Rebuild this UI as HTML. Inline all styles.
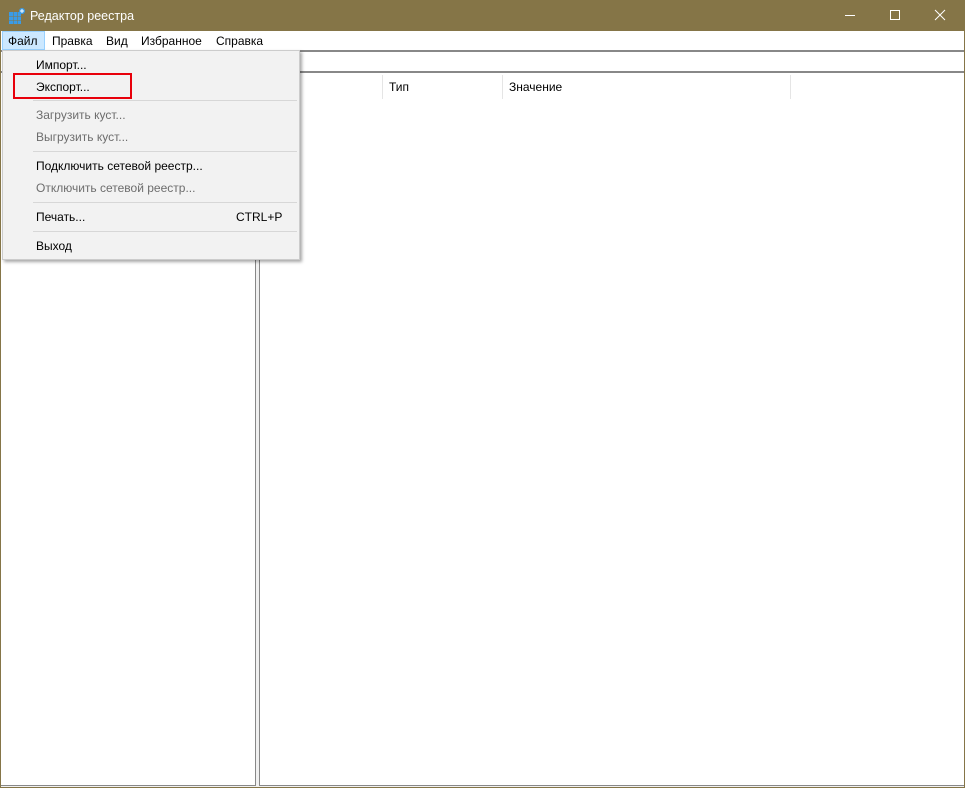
<!DOCTYPE html>
<html><head><meta charset="utf-8"><style>
*{margin:0;padding:0;box-sizing:border-box}
body{width:965px;height:788px;overflow:hidden;background:#857547;font-family:"Liberation Sans",sans-serif;font-size:12px;color:#000;position:relative}
.abs{position:absolute}
.title{left:30px;top:9px;color:#fff;font-size:12.5px}
.menubar{left:1px;top:31px;width:963px;height:19px;background:#fff}
.mi{position:absolute;top:3px}
.client{left:1px;top:50px;width:963px;height:737px;background:#f0f0f0}
.menu{left:2px;top:50px;width:298px;height:210px;background:#f2f2f2;border:1px solid #ccc;box-shadow:2px 2px 3px rgba(0,0,0,.35)}
.it{position:absolute;left:33px}
.dis{color:#6d6d6d}
.sep{position:absolute;left:30px;width:264px;height:1px;background:#d7d7d7}
</style></head><body>
<svg class="abs" style="left:9px;top:8px" width="16" height="16"><g fill="#3a9be6"><rect x="0" y="4" width="4" height="4"/><rect x="4.5" y="4" width="4" height="4"/><rect x="9" y="4" width="3" height="4"/><rect x="0" y="8.5" width="4" height="3.5"/><rect x="4.5" y="8.5" width="4" height="3.5"/><rect x="9" y="8.5" width="3" height="3.5"/><rect x="0" y="12.5" width="4" height="3.5"/><rect x="4.5" y="12.5" width="4" height="3.5"/><rect x="9" y="12.5" width="3" height="3.5"/></g><circle cx="13" cy="3" r="3" fill="#3a9be6"/><path d="M13 1v4M11 3h4" stroke="#fff" stroke-width="1"/></svg>
<div class="abs title">Редактор реестра</div>
<svg class="abs" style="left:845px;top:9px" width="110" height="14"><path d="M0 6.5h10" stroke="#fff"/><rect x="45.5" y="1.5" width="9" height="9" fill="none" stroke="#fff"/><path d="M90 1l10 10M100 1l-10 10" stroke="#fff"/></svg>
<div class="abs menubar">
<div class="abs" style="left:1px;top:0;width:43px;height:19px;background:#cce8ff;border:1px solid #99d1ff"></div>
<span class="mi" style="left:7px">Файл</span><span class="mi" style="left:51px">Правка</span><span class="mi" style="left:105px">Вид</span><span class="mi" style="left:140px">Избранное</span><span class="mi" style="left:215px">Справка</span>
</div>
<div class="abs client">
<div class="abs" style="left:0;top:0;width:963px;height:22px;background:#fff;border-top:2px solid #888;border-bottom:1px solid #888"></div>
<div class="abs" style="left:0;top:22px;width:255px;height:714px;background:#fff;border-top:1px solid #888;border-right:1px solid #888;border-bottom:1px solid #888"></div>
<div class="abs" style="left:258px;top:22px;width:705px;height:714px;background:#fff;border-top:1px solid #888;border-left:1px solid #888;border-bottom:1px solid #888">
<div class="abs" style="left:122px;top:2px;width:1px;height:24px;background:#e5e5e5"></div>
<div class="abs" style="left:242px;top:2px;width:1px;height:24px;background:#e5e5e5"></div>
<div class="abs" style="left:530px;top:2px;width:1px;height:24px;background:#e5e5e5"></div>
<span class="abs" style="left:129px;top:7px">Тип</span>
<span class="abs" style="left:249px;top:7px">Значение</span>
</div>
</div>
<div class="abs menu">
<span class="it" style="top:7px">Импорт...</span>
<span class="it" style="top:29px">Экспорт...</span>
<div class="sep" style="top:49px"></div>
<span class="it dis" style="top:57px">Загрузить куст...</span>
<span class="it dis" style="top:79px">Выгрузить куст...</span>
<div class="sep" style="top:100px"></div>
<span class="it" style="top:108px">Подключить сетевой реестр...</span>
<span class="it dis" style="top:130px">Отключить сетевой реестр...</span>
<div class="sep" style="top:151px"></div>
<span class="it" style="top:159px">Печать...</span>
<span class="abs" style="left:233px;top:159px">CTRL+P</span>
<div class="sep" style="top:180px"></div>
<span class="it" style="top:188px">Выход</span>
</div>
<div class="abs" style="left:13px;top:73px;width:119px;height:26px;border:2px solid #e8000b"></div>
</body></html>
